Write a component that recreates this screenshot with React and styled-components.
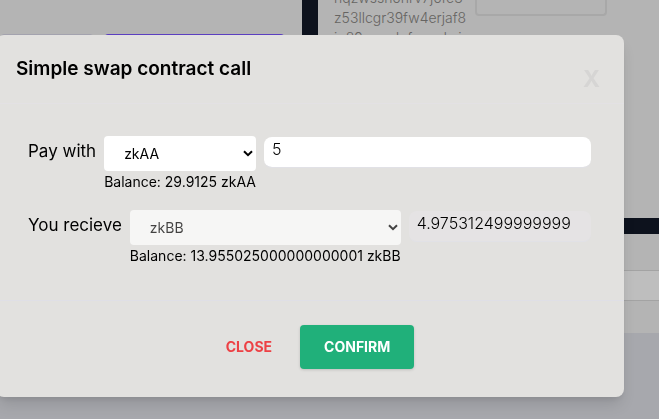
import React, { useState } from "react";
import styled, { createGlobalStyle } from "styled-components";

const GlobalStyle = createGlobalStyle`
  *, *::before, *::after { box-sizing: border-box; }
  body {
    margin: 0;
    overflow: hidden;
    background: #a7a8ad;
    font-family: Inter, "Liberation Sans", sans-serif;
    color: #000;
  }
  button, input, select { font-family: inherit; margin: 0; }
`;

const Page = styled.div`
  display: grid;
  grid-template-columns: 302px 1fr;
  column-gap: 16px;
  background: #0d121d;
`;

const Panel = styled.section`
  background: #b4b4b4;
`;

const Column = styled.div`
  display: flex;
  flex-direction: column;
  gap: 16px;
`;

const TabPanel = styled(Panel)`
  display: flex;
  gap: 10px;
  padding: 34px 17px 0 0;
`;

const TabButton = styled.button`
  flex: ${({ $primary }) => ($primary ? "1" : "0 0 94px")};
  height: 40px;
  border: 1px solid ${({ $primary }) => ($primary ? "#5b3fc0" : "#a3a2ae")};
  border-radius: 4px;
  background: ${({ $primary }) => ($primary ? "#5b3fc0" : "#b4b4b4")};
`;

const AddressPanel = styled(Panel)`
  display: flex;
  align-items: flex-start;
  gap: 8px;
  height: 218px;
  padding-left: 16px;
`;

const Address = styled.p`
  width: 133px;
  margin: -12px 0 0;
  font-size: 14px;
  font-weight: 300;
  line-height: 20px;
  color: #666462;
`;

const AddressBox = styled.div`
  width: 132px;
  height: 16px;
  border: 2px solid #a8a8a8;
  border-top: 0;
  border-radius: 0 0 4px 4px;
`;

const ListPanel = styled(Panel)`
  padding: 36px 0 32px;
`;

const ListRow = styled.div`
  height: 31px;
  background: #bebebe;
  border-top: 1px solid #a3a3a3;
  border-bottom: 1px solid #a3a3a3;
`;

const Overlay = styled.div`
  position: fixed;
  inset: 0;
  padding: 35px 35px 0 0;
`;

const Dialog = styled.form`
  margin-left: -4px;
  background: #e2e1df;
  border-radius: 8px;
  box-shadow: 0 10px 15px -3px rgba(0, 0, 0, 0.12), 0 4px 6px -2px rgba(0, 0, 0, 0.08);
`;

const DialogHeader = styled.header`
  display: flex;
  justify-content: space-between;
  align-items: flex-start;
  padding: 20px 24px 20px 20px;
  border-bottom: 1px solid #e3e1e4;
`;

const Title = styled.h3`
  margin: 0;
  font-size: 19px;
  line-height: 28px;
  font-weight: 600;
`;

const Dismiss = styled.button`
  height: 28px;
  padding: 12px 0 0;
  border: 0;
  background: transparent;
  color: #d6d5d4;
  font-size: 23px;
  line-height: 24px;
  font-weight: 700;
`;

const DialogBody = styled.div`
  display: flex;
  flex-direction: column;
  gap: 18px;
  padding: 32px 33px 34px 32px;
`;

const SwapRow = styled.div`
  display: flex;
  align-items: flex-start;
  gap: 8px;
`;

const Label = styled.label`
  flex: none;
  font-size: 17px;
  line-height: 30px;
`;

const TokenField = styled.div`
  flex: none;
  display: flex;
  flex-direction: column;
`;

const chevron = encodeURIComponent(
  '<svg xmlns="http://www.w3.org/2000/svg" width="10" height="7" viewBox="0 0 10 7"><path d="M1 1.2L5 5.2L9 1.2" fill="none" stroke="#000" stroke-width="2"/></svg>'
);

const TokenSelect = styled.select`
  appearance: none;
  width: 100%;
  height: 35px;
  padding: 0 20px;
  border: 0;
  border-radius: 4px;
  background: #fff url("data:image/svg+xml,${chevron}") no-repeat right 3px center;
  color: #000;
  font-size: 14px;
  &:disabled { opacity: 0.7; }
`;

const Balance = styled.span`
  font-size: 14px;
  line-height: 20px;
  padding-top: 1px;
`;

const Amount = styled.input`
  flex: 1;
  min-width: 0;
  height: 31px;
  margin-top: 1px;
  padding: 0 8px 6px;
  border: 0;
  border-bottom: 1px solid #e1e1e6;
  border-radius: 8px;
  background: #fff;
  background-clip: padding-box;
  color: #000;
  font-size: 16px;
  font-weight: 300;
  &:disabled { background: #e5e3e4; }
`;

const DialogFooter = styled.footer`
  display: flex;
  justify-content: center;
  gap: 4px;
  padding: 24px 20px 28px 16px;
  border-top: 1px solid #dfdfe6;
`;

const ActionButton = styled.button`
  height: 44px;
  padding: 0 24px;
  border: 0;
  border-radius: 4px;
  font-size: 14px;
  font-weight: 700;
  line-height: 20px;
  background: ${({ $solid }) => ($solid ? "#20b07a" : "transparent")};
  color: ${({ $solid }) => ($solid ? "#fff" : "#ed4145")};
  box-shadow: ${({ $solid }) => ($solid ? "0 1px 3px rgba(0, 0, 0, 0.15)" : "none")};
`;

function TokenRow({ id, label, token, balance, amount, onAmount, disabled }) {
  return (
    <SwapRow>
      <Label htmlFor={id}>{label}</Label>
      <TokenField>
        <TokenSelect id={id} defaultValue={token} disabled={disabled}>
          <option>{token}</option>
        </TokenSelect>
        <Balance>Balance: {balance} {token}</Balance>
      </TokenField>
      <Amount
        aria-label={`${label} amount`}
        value={amount}
        onChange={onAmount}
        disabled={disabled}
      />
    </SwapRow>
  );
}

export default function App() {
  const [pay, setPay] = useState("5");
  return (
    <>
      <GlobalStyle />
      <Page>
        <TabPanel>
          <TabButton aria-label="Secondary action" />
          <TabButton aria-label="Primary action" $primary />
        </TabPanel>
        <Column>
          <AddressPanel>
            <Address>
              hqzwssh6hrv7j6fe3<br />z53llcgr39fw4erjaf8<br />jq89gwudufswedwj
            </Address>
            <AddressBox />
          </AddressPanel>
          <ListPanel>
            <ListRow />
          </ListPanel>
        </Column>
      </Page>
      <Overlay>
        <Dialog role="dialog" aria-labelledby="dialog-title" onSubmit={(e) => e.preventDefault()}>
          <DialogHeader>
            <Title id="dialog-title">Simple swap contract call</Title>
            <Dismiss type="button">X</Dismiss>
          </DialogHeader>
          <DialogBody>
            <TokenRow
              id="pay"
              label="Pay with"
              token="zkAA"
              balance="29.9125"
              amount={pay}
              onAmount={(e) => setPay(e.target.value)}
            />
            <TokenRow
              id="receive"
              label="You recieve"
              token="zkBB"
              balance="13.955025000000000001"
              amount="4.975312499999999"
              disabled
            />
          </DialogBody>
          <DialogFooter>
            <ActionButton type="button">CLOSE</ActionButton>
            <ActionButton type="submit" $solid>CONFIRM</ActionButton>
          </DialogFooter>
        </Dialog>
      </Overlay>
    </>
  );
}
